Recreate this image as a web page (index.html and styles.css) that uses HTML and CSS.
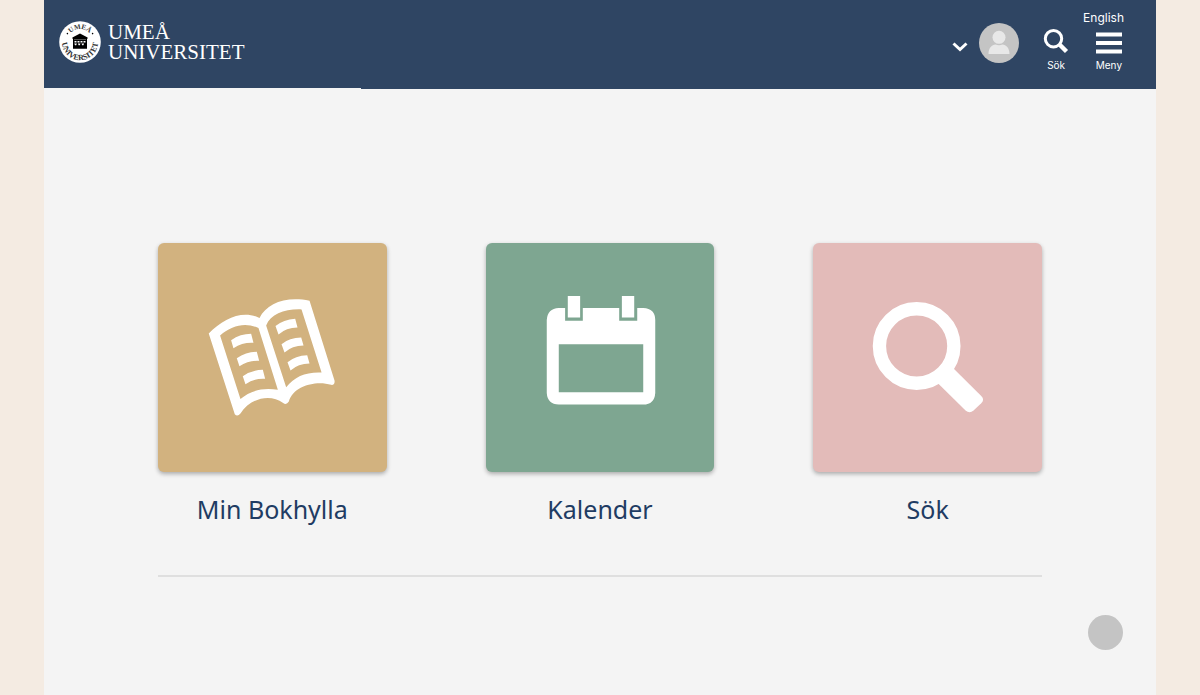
FILE: index.html
```html
<!DOCTYPE html>
<html lang="sv">
<head>
    <meta charset="UTF-8">
    <meta name="viewport" content="width=device-width, initial-scale=1">
    <title>Umeå Universitet</title>
    <link rel="stylesheet" href="styles.css">
</head>
<body>
<div class="page">
    <header class="header">
        <a class="logo" href="#">
            <svg class="seal" viewBox="0 0 42 42" aria-hidden="true">
                <defs>
                    <path id="arc-top" d="M8 21a13 13 0 0 1 26 0"/>
                    <path id="arc-bottom" d="M4.500 14a18 18 0 1 0 33 0"/>
                </defs>
                <circle cx="21" cy="21" r="20.8" fill="#fff"/>
                <text class="seal-top"><textPath href="#arc-top" startOffset="50%">UMEÅ</textPath></text>
                <text class="seal-bottom"><textPath href="#arc-bottom" startOffset="50%">UNIVERSITET</textPath></text>
                <circle cx="8.400" cy="12.600" r="0.8"/>
                <circle cx="33.600" cy="12.600" r="0.8"/>
                <path d="M13.400 16.400L21 12.400l7.600 4v1.400H28v10H14v-10h-.6z"/>
                <path d="M15 18.600h12" stroke="#999" stroke-width=".6"/>
                <path d="M15.500 20h2v1.600h-2zm3 0h2v1.600h-2zm3 0h2v1.600h-2zm3 0h2v1.600h-2zM15.300 22.400h2.600l-.7 1.800h-1.200zm3.600 0h2.600l-.7 1.800h-1.200zm3.600 0h2.600l-.7 1.800h-1.200z" fill="#fff"/>
            </svg>
            <span class="wordmark">UMEÅ<br>UNIVERSITET</span>
        </a>

        <div class="tools">
            <button class="profile" type="button" aria-label="Profil">
                <svg class="chevron" viewBox="0 0 16 10"><path d="M1.500 1.500L8 7.500l6.500-6" fill="none" stroke="#fff" stroke-width="3"/></svg>
                <svg class="avatar" viewBox="0 0 40 40">
                    <circle cx="20" cy="20" r="20" fill="#c4c4c4"/>
                    <circle cx="20" cy="14.300" r="6.500" fill="#e8e8e8"/>
                    <path d="M9.500 31c0-6 3.500-9.500 7-9.500 2 1 5 1 7 0 3.500 0 7 3.500 7 9.500z" fill="#e8e8e8"/>
                </svg>
            </button>
            <button class="tool" type="button">
                <svg class="tool-icon" viewBox="0 0 26 26">
                    <circle cx="10.500" cy="10.700" r="8.200" fill="none" stroke="#fff" stroke-width="3"/>
                    <path d="M16.500 16.500l7 7" stroke="#fff" stroke-width="4.400"/>
                </svg>
                Sök
            </button>
            <div class="menu">
                <a class="language" href="#" lang="en">English</a>
                <button class="tool" type="button">
                    <svg class="tool-icon" viewBox="0 0 26 26"><path d="M0 6.500h26M0 15h26M0 23.500h26" stroke="#fff" stroke-width="4"/></svg>
                    Meny
                </button>
            </div>
        </div>
    </header>
    <div class="progress"><div class="progress-bar"></div></div>

    <main class="content">
        <nav class="tiles">
            <a class="tile" href="#">
                <svg class="tile-icon tile-gold" viewBox="26 25 685 685">
                    <path fill-rule="evenodd" d="M178 296C222 250 282 224 330 250C352 206 408 184 480 198L555 438Q556 451 545 450C500 436 432 452 418 500Q410 512 401 504C360 474 300 492 273 536Q264 547 256 538zM212 302L273 492C302 468 342 456 385 465L327 280C290 262 248 270 212 302zM350 272L410 457C436 425 468 411 516 413L456 224C406 222 364 238 350 272z"/>
                    <path d="M245 316Q273 297 305 297L312 324Q280 322 252 340zM262 370Q290 351 322 351L329 378Q297 376 270 394zM280 424Q308 405 340 405L347 432Q315 430 288 448zM378 274Q402 254 437 252L444 278Q410 278 387 299zM396 328Q420 308 455 308L462 332Q428 332 405 353zM414 382Q438 362 473 361L480 386Q446 386 423 407z"/>
                </svg>
                <span class="tile-label">Min Bokhylla</span>
            </a>
            <a class="tile" href="#">
                <svg class="tile-icon tile-green" viewBox="19 25 685 685">
                    <path fill-rule="evenodd" d="M237 220H256V258H309V220H418V258H472V220H490Q526 222 526 256V474Q524 508 490 509H237Q203 507 201 474V256Q203 222 237 220zM237 328V472H490V328z"/>
                    <path d="M264 184h37v64h-37zM426 184h37v64h-37z"/>
                </svg>
                <span class="tile-label">Kalender</span>
            </a>
            <a class="tile" href="#">
                <svg class="tile-icon tile-pink" viewBox="26 25 685 685">
                    <circle cx="336.500" cy="333.500" r="111.500" fill="none" stroke="#fff" stroke-width="40"/>
                    <path d="M447 401L530 483Q541 494 530 505L507 527Q495 537 483 527L401 446z"/>
                </svg>
                <span class="tile-label">Sök</span>
            </a>
        </nav>
        <hr class="divider">
    </main>

    <button class="float-button" type="button" aria-label="Hjälp"></button>
</div>
</body>
</html>
```
FILE: styles.css
```css
* {
    box-sizing: border-box;
}

body {
    margin: 0;
    background: #f4ebe2;
    font-family: "Noto Sans", sans-serif;
}

a {
    color: inherit;
    text-decoration: none;
}

button {
    padding: 0;
    border: none;
    background: none;
    color: inherit;
    font: inherit;
    cursor: pointer;
}

.page {
    min-height: 100vh;
    margin: 0 44px;
    background: #f4f4f4;
}

/* header */
.header {
    display: flex;
    justify-content: space-between;
    align-items: flex-end;
    padding: 10px 32px 17px 15px;
    background: #2f4563;
    color: #fff;
}

.logo {
    display: flex;
    align-items: center;
    gap: 7px;
    padding-bottom: 8px;
}

.seal {
    width: 42px;
    height: 42px;
}

.seal text {
    font-family: "Liberation Serif", serif;
    font-weight: bold;
    text-anchor: middle;
    fill: #333;
}

.seal-top {
    font-size: 7px;
}

.seal-bottom {
    font-size: 8px;
}

.wordmark {
    font-family: "Liberation Serif", serif;
    font-size: 21px;
    line-height: 20px;
}

.tools {
    display: flex;
    align-items: flex-end;
    gap: 14px;
}

.profile {
    display: flex;
    align-items: center;
    gap: 11px;
    margin-right: 10px;
    padding-bottom: 8px;
}

.chevron {
    width: 16px;
    height: 10px;
    margin-top: 8px;
}

.avatar {
    width: 40px;
    height: 40px;
}

.tool {
    display: flex;
    flex-direction: column;
    align-items: center;
    gap: 5px;
    font-family: Inter, sans-serif;
    font-size: 10px;
    line-height: 12px;
}

.tool-icon {
    width: 26px;
    height: 26px;
}

.menu {
    display: flex;
    flex-direction: column;
    align-items: flex-end;
    gap: 2px;
}

.menu .tool {
    margin-right: 2px;
}

.language {
    font-family: Inter, sans-serif;
    font-size: 12px;
    line-height: 16px;
}

.progress {
    height: 1px;
    background: #2f4563;
}

.progress-bar {
    width: 28.5%;
    height: 1px;
    background: #f4f4f4;
}

/* start page tiles */
.content {
    padding: 154px 114px 0;
}

.tiles {
    display: grid;
    grid-template-columns: repeat(3, 1fr);
    gap: 99px;
}

.tile {
    display: flex;
    flex-direction: column;
    gap: 21px;
}

.tile-icon {
    width: 100%;
    aspect-ratio: 1;
    border-radius: 6px;
    box-shadow: 0 2px 4px rgba(0, 0, 0, 0.3);
    fill: #fff;
}

.tile-gold {
    background: #d2b27f;
}

.tile-green {
    background: #7ea691;
}

.tile-pink {
    background: #e3bbb9;
}

.tile-label {
    color: #1f3c63;
    font-size: 25px;
    line-height: 32px;
    text-align: center;
}

.divider {
    height: 2px;
    margin: 50px 0 0;
    border: none;
    background: #dfdfdf;
}

.float-button {
    position: fixed;
    right: 77px;
    bottom: 45px;
    width: 35px;
    height: 35px;
    border-radius: 50%;
    background: #c4c4c4;
}
```
